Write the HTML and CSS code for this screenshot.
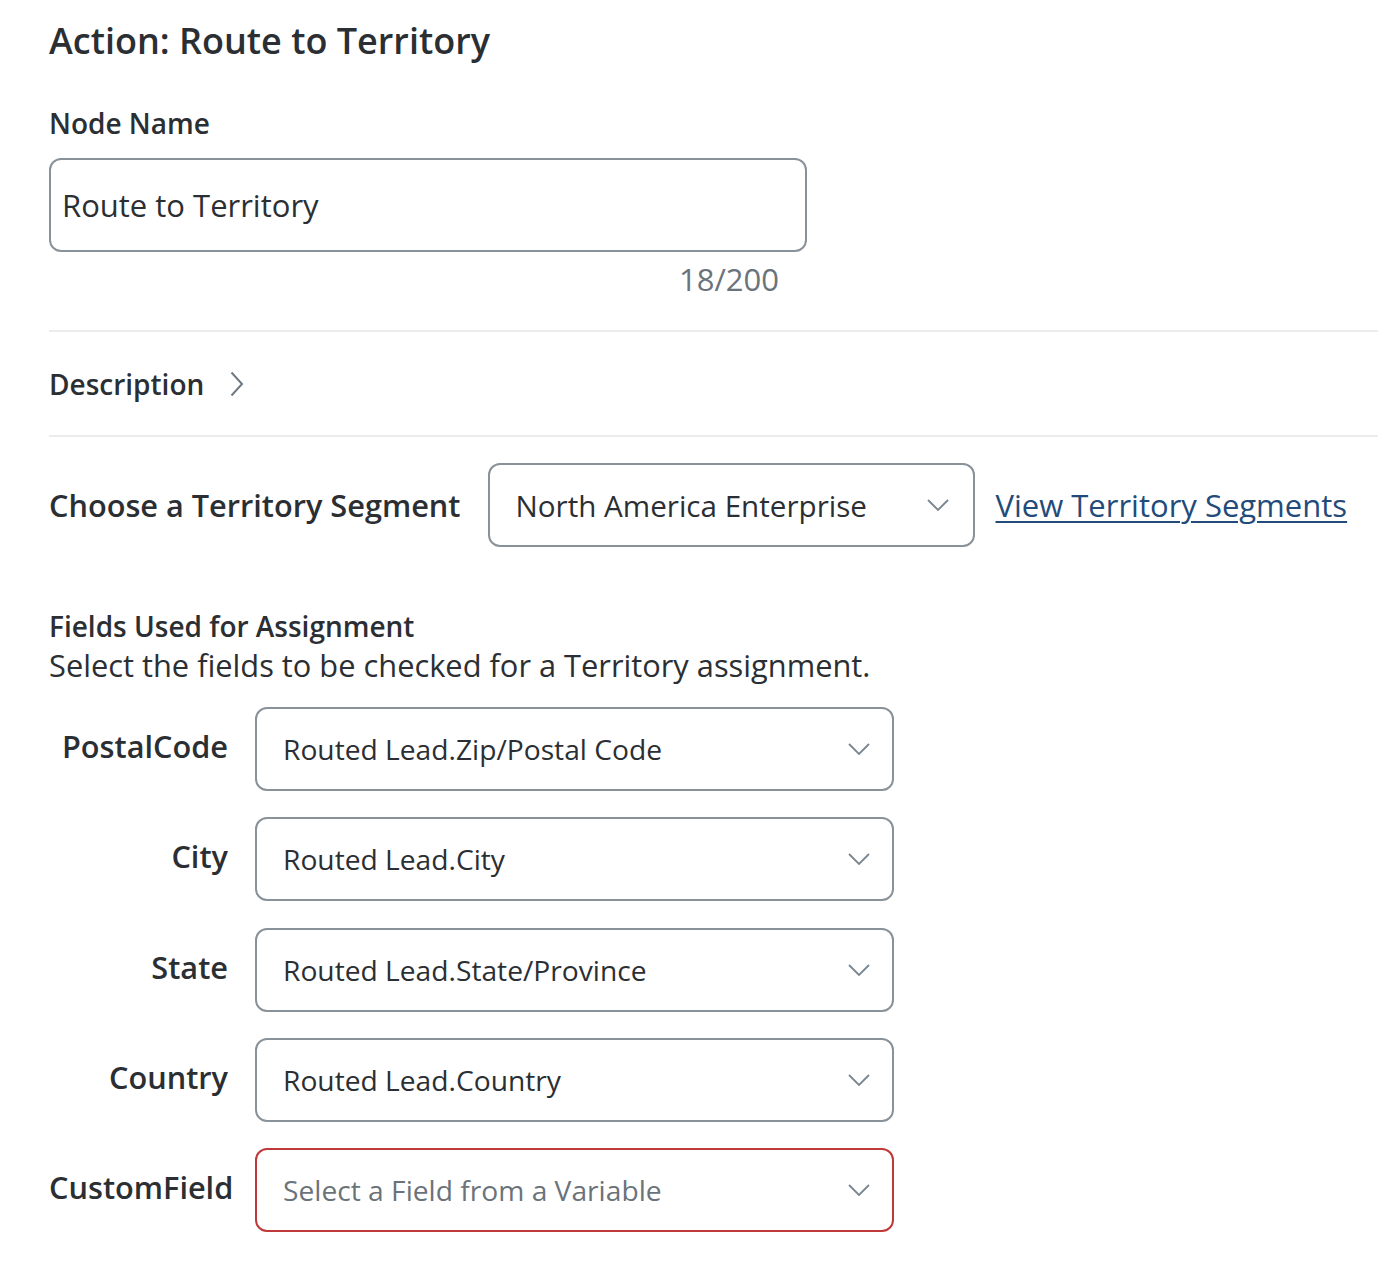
FILE: index.html
```html
<!DOCTYPE html>
<html lang="en">
<head>
<meta charset="utf-8">
<title>Action: Route to Territory</title>
<link rel="stylesheet" href="styles.css">
</head>
<body>
<div class="panel">
  <h1 class="title">Action: Route to Territory</h1>

  <div class="node-name">
    <div class="label">Node Name</div>
    <div class="text-input">Route to Territory</div>
    <div class="counter">18/200</div>
  </div>

  <div class="divider"></div>

  <div class="collapsible">
    <span class="label">Description</span>
    <svg class="chev-right" width="14" height="26" viewBox="0 0 14 26"><path d="M1.5 1.5 L12 13 L1.5 24.5" fill="none" stroke="#6f7a84" stroke-width="2"/></svg>
  </div>

  <div class="divider divider-tight"></div>

  <div class="segment-row">
    <span class="big-label">Choose a Territory Segment</span>
    <div class="select seg-select">
      <span class="select-text seg-text">North America Enterprise</span>
      <svg class="chev-down" width="22" height="12" viewBox="0 0 22 12"><path d="M1 1 L11 11 L21 1" fill="none" stroke="#7a8690" stroke-width="1.8"/></svg>
    </div>
    <a class="link" href="#">View Territory Segments</a>
  </div>

  <div class="fields-head">
    <div class="label">Fields Used for Assignment</div>
    <div class="help">Select the fields to be checked for a Territory assignment.</div>
  </div>

  <div class="mapping">
    <div class="map-label">PostalCode</div>
    <div class="select">
      <span class="select-text">Routed Lead.Zip/Postal Code</span>
      <svg class="chev-down" width="22" height="12" viewBox="0 0 22 12"><path d="M1 1 L11 11 L21 1" fill="none" stroke="#7a8690" stroke-width="1.8"/></svg>
    </div>

    <div class="map-label">City</div>
    <div class="select">
      <span class="select-text">Routed Lead.City</span>
      <svg class="chev-down" width="22" height="12" viewBox="0 0 22 12"><path d="M1 1 L11 11 L21 1" fill="none" stroke="#7a8690" stroke-width="1.8"/></svg>
    </div>

    <div class="map-label">State</div>
    <div class="select">
      <span class="select-text">Routed Lead.State/Province</span>
      <svg class="chev-down" width="22" height="12" viewBox="0 0 22 12"><path d="M1 1 L11 11 L21 1" fill="none" stroke="#7a8690" stroke-width="1.8"/></svg>
    </div>

    <div class="map-label">Country</div>
    <div class="select">
      <span class="select-text">Routed Lead.Country</span>
      <svg class="chev-down" width="22" height="12" viewBox="0 0 22 12"><path d="M1 1 L11 11 L21 1" fill="none" stroke="#7a8690" stroke-width="1.8"/></svg>
    </div>

    <div class="map-label">CustomField</div>
    <div class="select select-error">
      <span class="select-text placeholder">Select a Field from a Variable</span>
      <svg class="chev-down" width="22" height="12" viewBox="0 0 22 12"><path d="M1 1 L11 11 L21 1" fill="none" stroke="#7a8690" stroke-width="1.8"/></svg>
    </div>
  </div>
</div>
</body>
</html>
```

FILE: styles.css
```css
* { box-sizing: border-box; }

html, body {
  margin: 0;
  padding: 0;
  background: #ffffff;
}

body {
  font-family: "Open Sans", "Noto Sans", "Liberation Sans", sans-serif;
  color: #2b2f33;
}

.panel {
  padding: 16px 0 40px 49px;
}

.title {
  margin: 0;
  font-size: 36px;
  font-weight: 600;
  line-height: 50px;
  color: #2b2f33;
}

.label {
  font-size: 28px;
  font-weight: 600;
  line-height: 38px;
  color: #2b2f33;
}

.node-name {
  margin-top: 38px;
  width: 758px;
}

.node-name .label {
  margin-bottom: 16px;
}

.text-input {
  height: 94px;
  border: 2px solid #8a9299;
  border-radius: 12px;
  padding: 0 11px;
  display: flex;
  align-items: center;
  font-size: 31px;
  color: #2b2f33;
}

.counter {
  text-align: right;
  padding-right: 28px;
  margin-top: 7px;
  font-size: 31px;
  line-height: 40px;
  color: #6b737a;
}

.divider {
  height: 2px;
  background: #ececec;
  margin-top: 31px;
}

.divider-tight {
  margin-top: 0;
}

.collapsible {
  display: flex;
  align-items: center;
  gap: 26px;
  height: 103px;
}

.segment-row {
  display: flex;
  align-items: center;
  margin-top: 26px;
}

.big-label {
  font-size: 30.7px;
  font-weight: 600;
  color: #2b2f33;
  margin-right: 27px;
  white-space: nowrap;
}

.select {
  height: 84px;
  border: 2px solid #8a9299;
  border-radius: 12px;
  padding: 0 22px 0 26px;
  display: flex;
  align-items: center;
  justify-content: space-between;
  background: #fff;
}

.seg-select {
  width: 487px;
  height: 84px;
  padding: 0 24px 0 26px;
  margin-right: 21px;
}

.select-text {
  font-size: 28.2px;
  color: #2b2f33;
  white-space: nowrap;
}

.seg-text {
  font-size: 29.6px;
}

.select-text.placeholder {
  color: #6b737a;
}

.select-error {
  border-color: #c0393a;
}

.chev-down {
  flex: none;
}

.link {
  font-size: 31px;
  color: #234b7a;
  text-decoration: underline;
  text-decoration-thickness: 2px;
  text-underline-offset: 4px;
  white-space: nowrap;
}

.fields-head {
  margin-top: 60px;
}

.help {
  font-size: 30.8px;
  line-height: 41px;
  color: #2b2f33;
}

.mapping {
  margin-top: 21px;
  display: grid;
  grid-template-columns: 179px 639px;
  column-gap: 27px;
  row-gap: 26.25px;
  align-items: center;
}

.map-label {
  text-align: right;
  white-space: nowrap;
  font-size: 30.7px;
  font-weight: 600;
  color: #2b2f33;
  margin-top: -6px;
}
```
